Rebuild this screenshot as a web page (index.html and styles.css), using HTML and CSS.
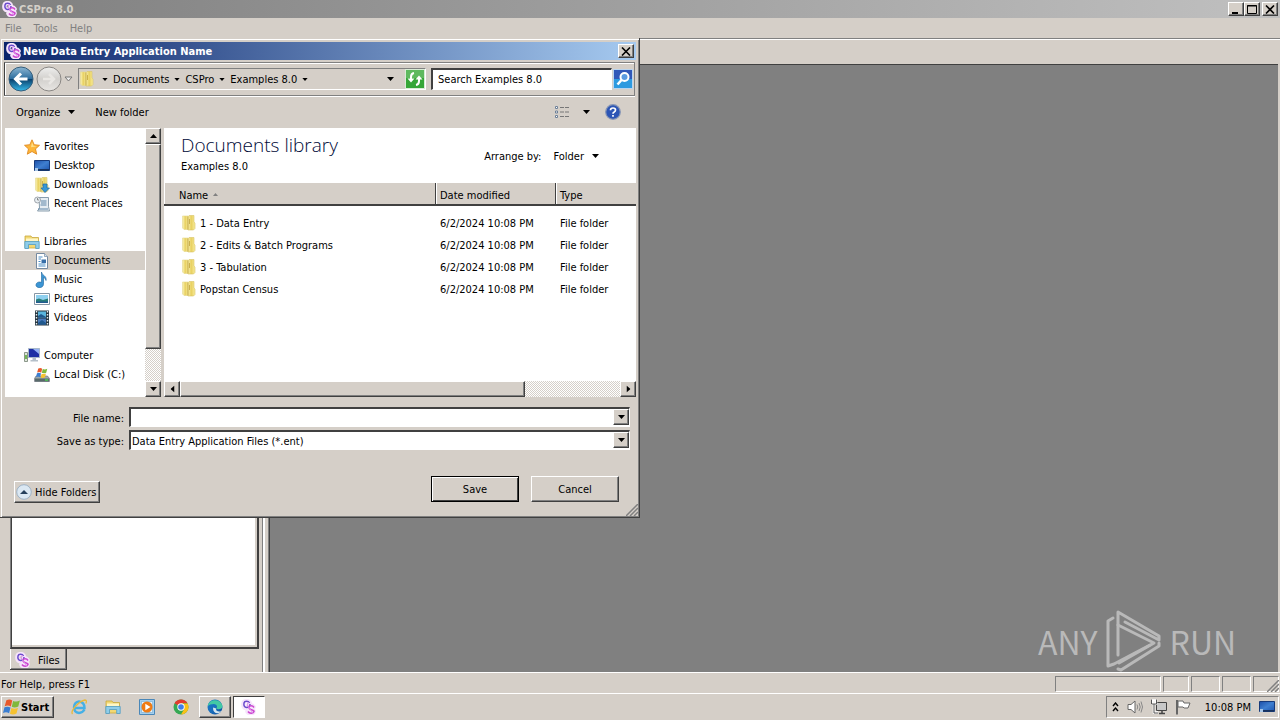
FILE: index.html
```html
<!DOCTYPE html>
<html lang="en">
<head>
  <meta charset="utf-8">
  <title>CSPro 8.0</title>
  <link rel="stylesheet" href="styles.css">
</head>
<body>
  <svg class="defs" aria-hidden="true">
    <linearGradient id="gFolder"><stop offset="0" stop-color="#fbf5bd"/><stop offset=".5" stop-color="#e8d060"/><stop offset="1" stop-color="#f8ec9c"/></linearGradient>
    <linearGradient id="gBlue" x2="0" y2="1"><stop offset="0" stop-color="#8db6d2"/><stop offset=".48" stop-color="#2f6f9f"/><stop offset=".52" stop-color="#0b426e"/><stop offset="1" stop-color="#35b9ea"/></linearGradient>
    <linearGradient id="gGrey" x2="0" y2="1"><stop offset="0" stop-color="#efefee"/><stop offset=".5" stop-color="#d2d0cd"/><stop offset="1" stop-color="#e8e6e3"/></linearGradient>
    <linearGradient id="gScreen" x2="1" y2="1"><stop offset="0" stop-color="#1c4fa8"/><stop offset=".5" stop-color="#3f7fd0"/><stop offset="1" stop-color="#1d55b0"/></linearGradient>
    <linearGradient id="gEdge" x2="1" y2="1"><stop offset="0" stop-color="#1879c8"/><stop offset=".5" stop-color="#1a6fbd"/><stop offset="1" stop-color="#0c4d9a"/></linearGradient>
    <symbol id="cspro" viewBox="0 0 16 16">
      <g fill="none" stroke="#f6e4fb" stroke-width="4.500" stroke-linecap="round"><path d="M8.500 3.500C7 1.500 3 1.500 2.500 4.500s1 5 3.500 4.500c2-.4 3-2 3-3.500"/><path d="M12.500 8C11 5.500 6.500 6 7.500 8.500S13 10 12.500 12.500 8 15 6.500 12.500"/></g>
      <path d="M8.500 4C7.500 1.500 3.500 1.500 3 4s.5 4.500 2.500 4.500c2 0 3.500-1.500 3.500-3.500" fill="none" stroke="#6a4ccc" stroke-width="1.500"/>
      <path d="M13 8.500C11.500 6 7 6.500 8 9s5.500 1.500 5 3.500-4.500 2.500-6 0" fill="none" stroke="#cc44d0" stroke-width="1.500"/>
      <path d="M7.500 3l-1.500 3 6 8" fill="none" stroke="#d987ea" stroke-width="1"/>
    </symbol>
    <symbol id="folder" viewBox="0 0 16 16">
      <path d="M1.500 1h5.500v13.500H3L1.500 13z" fill="url(#gFolder)" stroke="#e4d68a" stroke-width=".6"/>
      <path d="M6.500 2l1.500-1.500H13V7l1 1v5.500L12.500 15H7z" fill="url(#gFolder)" stroke="#d8c566" stroke-width=".6"/>
      <path d="M7 1.500v13M8.500 4v5" stroke="#c2a43c" stroke-width=".8"/>
    </symbol>
    <symbol id="star" viewBox="0 0 16 16"><path d="M8 .8l2.200 4.900 5.300.6-4 3.600 1.200 5.300L8 12.500l-4.700 2.700 1.200-5.300-4-3.600 5.300-.6z" fill="#fdb63a" stroke="#e08a22" stroke-width=".9"/><path d="M8 3l1.400 3.700 3.600.5-6 1z" fill="#ffe08a"/></symbol>
    <symbol id="desk" viewBox="0 0 16 16"><path d="M.5 2.500h15v10H.5z" fill="url(#gScreen)" stroke="#173a7a"/><path d="M1 11h14v1.500H1z" fill="#17325e"/><path d="M1 10h3v3H1z" fill="#a8c8ea"/></symbol>
    <symbol id="down" viewBox="0 0 16 16"><use href="#folder"/><path d="M9 7h4v4h2.500L11 15.500 7 11h2z" fill="#3796d6" stroke="#1b6aa8" stroke-width=".7"/></symbol>
    <symbol id="recent" viewBox="0 0 16 16"><path d="M5 1.500h9.500v9l1 4.500h-12l2-3z" fill="#e6edf2" stroke="#7d93a4" stroke-width=".9"/><path d="M7 5h5.500M7 7h5.500M6.500 9h6M4 13h10" stroke="#5f86a8"/><circle cx="3.500" cy="4" r="3" fill="#e8eef2" stroke="#8a9299" stroke-width=".8"/><path d="M3.500 2v2h1.500" fill="none" stroke="#666" stroke-width=".7"/></symbol>
    <symbol id="library" viewBox="0 0 16 16"><path d="M1 2h6l1 1.500h6.500V14H1z" fill="#f2d873" stroke="#c9a83e" stroke-width=".8"/><path d="M2 4.500h12v3H2z" fill="#fff6c6"/><path d="M.8 7.500h14.400v7h-3.500v-4H4.500v4H.8z" fill="#8fcdea" stroke="#4f9cc4" stroke-width=".8"/></symbol>
    <symbol id="doc" viewBox="0 0 16 16"><path d="M2.500.5h8l3 3v12h-11z" fill="#fff" stroke="#7489a0"/><path d="M10.500.5v3h3" fill="#d5e2ee" stroke="#7489a0" stroke-width=".7"/><path d="M4.500 4h4M4.500 6h2.500M4.500 8.500h2M4.500 11h7M4.500 13h7" stroke="#4a8dc6"/><path d="M7.500 6.500H12V10H7.500z" fill="#376ea8"/></symbol>
    <symbol id="music" viewBox="0 0 16 16"><path d="M7.500 0c.4 3.500 5.500 3.500 4.500 8.500-.6-2-1.500-2.800-2.500-3V12c0 5-8 4.500-7.500.8.400-2.800 3.500-3.300 5.500-2.300z" fill="#3b95d4" stroke="#1d659e" stroke-width=".6"/></symbol>
    <symbol id="pics" viewBox="0 0 16 16"><path d="M.5 2.500h15v11H.5z" fill="#fff" stroke="#8696a5"/><path d="M2 4h12v8H2z" fill="#8fd0ef"/><path d="M2 8.500l3-1 4 1.500 5-1.500V12H2z" fill="#277d78"/><path d="M2 10.500h12V12H2z" fill="#225b90"/></symbol>
    <symbol id="video" viewBox="0 0 16 16"><path d="M1 .5h14v15H1z" fill="#263640"/><path d="M4 1.500h8v6H4z" fill="#5ab5dd"/><path d="M4 8.500h8v6H4z" fill="#4879bb"/><path d="M4 6l3-2 5 3v.5H4zM4 13l4-3 4 3v1.500H4z" fill="#1f588d"/><path d="M2.500 1v14M13.500 1v14" stroke="#e9eef1" stroke-width="1.400" stroke-dasharray="1.500 1.500"/></symbol>
    <symbol id="computer" viewBox="0 0 16 16"><path d="M.5 4.500h3v9h-3z" fill="#dfe6da" stroke="#718071" stroke-width=".8"/><path d="M1 7h2v4H1z" fill="#74b957"/><path d="M4.500.5h11v9h-11z" fill="#1d2fa4" stroke="#a9b9ca"/><path d="M9 1h6v5z" fill="#93b0f3"/><path d="M8.500 10h3.500v2h2v1.500H6.500V12h2z" fill="#b5c0ca"/></symbol>
    <symbol id="winflag" viewBox="0 0 16 16"><path d="M3 2q3-1.500 5.200.2L7 7.500Q4.500 6 1.500 7.300z" fill="#e8592b"/><path d="M9 2.600q3 1.300 6-.3l-1.400 5.200Q10.500 9 7.800 7.800z" fill="#80b83b"/><path d="M1.300 8.300Q4 7 6.700 8.500l-1.300 5Q3 12 0 13.300z" fill="#3b7ed1"/><path d="M7.500 8.900q3 1.300 5.800-.3L12 13.800q-3 1.500-5.800.2z" fill="#f6c230"/></symbol>
    <symbol id="disk" viewBox="0 0 16 16"><path d="M2 9h11.500l2 2.500v3H.5v-3z" fill="#9eaaad" stroke="#667" stroke-width=".6"/><path d="M1 11.500h14v3H1z" fill="#596a6b"/><path d="M11 13h3" stroke="#4ce04c" stroke-width="1.300"/><use href="#winflag" x="2" y="0" width="12" height="12"/></symbol>
    <symbol id="tri" viewBox="0 0 7 4"><path d="M0 0h7L3.500 4z"/></symbol>
  </svg>

  <div class="desktop">
    <header class="titlebar inactive">
      <svg class="ico"><use href="#cspro"/></svg>
      <span class="title">CSPro 8.0</span>
      <button class="cap" aria-label="Minimize"><svg viewBox="0 0 10 9"><path d="M1 7h6v2H1z"/></svg></button>
      <button class="cap" aria-label="Maximize"><svg viewBox="0 0 10 9"><path d="M.5.500h9v8h-9zM0 1h10" fill="none" stroke="#000"/></svg></button>
      <button class="cap cap-close" aria-label="Close"><svg viewBox="0 0 10 9"><path d="M1 .5l8 8M9 .5l-8 8" stroke="#000" stroke-width="1.600"/></svg></button>
    </header>
    <nav class="menubar">
      <button>File</button><button>Tools</button><button>Help</button>
    </nav>
    <div class="toolbar"></div>

    <main class="work">
      <aside class="side">
        <div class="tree"></div>
        <button class="tab"><svg class="ico"><use href="#cspro"/></svg>Files</button>
      </aside>
      <div class="splitter"></div>
      <section class="canvas">
        <div class="watermark">
          <span>ANY</span>
          <svg viewBox="0 0 56 62"><g fill="none" stroke="#b9b9b9" stroke-width="3" stroke-linejoin="round" stroke-linecap="round"><path d="M7 8L2 11v45l6-2 36-19"/><path d="M12 45V2l41 24v4L19 12"/><path d="M12 15l36 18-35 20"/><path d="M12 59l3 1 38-24v-3"/></g></svg>
          <span>RUN</span>
        </div>
      </section>
    </main>

    <footer class="statusbar">
      <span class="status-text">For Help, press F1</span>
      <i class="pane pane-wide"></i><i class="pane pane-s"></i><i class="pane"></i><i class="pane"></i><i class="pane pane-s"></i>
      <svg class="grip" viewBox="0 0 12 12"><path d="M0 12L12 0M4 12l8-8M8 12l4-4" stroke="#808080" stroke-width="1.500"/></svg>
    </footer>

    <div class="taskbar">
      <button class="start"><svg class="ico-lg" viewBox="0 0 16 16"><use href="#winflag"/></svg>Start</button>
      <div class="quick">
        <button class="task" aria-label="Internet Explorer"><svg class="ico" viewBox="0 0 16 16"><path d="M13.500 10.500Q11.500 14 8 14q-5-.5-5-6 .5-5 5-5.500 5.500.500 5.500 6.500H4" fill="none" stroke="#45b0e6" stroke-width="2.400"/><path d="M1.500 15C-1 12 8 2 14 1c2 .2 1.500 2 .8 3.500" fill="none" stroke="#e9b93a" stroke-width="1.300"/></svg></button>
        <button class="task" aria-label="Explorer"><svg class="ico"><use href="#library"/></svg></button>
        <button class="task" aria-label="Media Player"><svg class="ico" viewBox="0 0 16 16"><path d="M.5.500h15v15H.5z" fill="#a3cfee" stroke="#4a87b8"/><path d="M2.500 2.500h11v11h-11z" fill="#e4f2fb" stroke="#73a9d0" stroke-width=".6"/><circle cx="8" cy="8" r="5.500" fill="#ef7b14"/><path d="M6.300 4.800L11.500 8l-5.200 3.200z" fill="#fff"/></svg></button>
        <button class="task" aria-label="Chrome"><svg class="ico" viewBox="0 0 16 16"><circle cx="8" cy="8" r="7.500" fill="#36a853"/><path d="M8 8L1.500 4.300A7.500 7.500 0 0 1 14.500 4.300H8z" fill="#e33b2e"/><path d="M8 15.500A7.500 7.500 0 0 0 14.600 4.400H8L11.200 9.900z" fill="#fbc116"/><circle cx="8" cy="8" r="3.700" fill="#fff"/><circle cx="8" cy="8" r="2.800" fill="#3f7fe8"/></svg></button>
        <button class="task raised" aria-label="Edge"><svg class="ico" viewBox="0 0 16 16"><circle cx="8" cy="8" r="7.500" fill="url(#gEdge)"/><path d="M.7 7C2 0 13-1 15.400 6.500c.5 4-4.400 4.500-6.200 3 2-2.500-.2-4.500-2.500-4.500Q3 5 .7 7z" fill="#43c9a4"/><path d="M9.200 9.500c-1 3 3.300 3.800 5.300 2.400-3.500 5-9.500 1.500-8.300-3.400z" fill="#d4e6ef"/></svg></button>
        <button class="task pressed" aria-label="CSPro"><svg class="ico"><use href="#cspro"/></svg></button>
      </div>
      <div class="tray">
        <svg class="chev" viewBox="0 0 7 10"><path d="M1 4l2.500-3L6 4M1 9l2.500-3L6 9" fill="none" stroke="#000" stroke-width="1.400"/></svg>
        <svg class="ico" viewBox="0 0 16 16"><path d="M1 5.500h3L8 2v12l-4-3.500H1z" fill="#fff" stroke="#666"/><path d="M10 5.500q1.500 2.500 0 5M12 4q2.500 4 0 8M14 2.500q3 5.500 0 11" fill="none" stroke="#888"/></svg>
        <svg class="ico" viewBox="0 0 16 16"><path d="M5.500 3.500h10v8h-10z" fill="#c8c8c8" stroke="#444"/><path d="M8 14.500h6M11 12v2" stroke="#444" stroke-width="1.500"/><path d="M1 1.500h4v3H1zM3 5v8.500h4" fill="none" stroke="#fff" stroke-width="2.500"/><path d="M.5.500v4.500h5V.5M3 5v9h4" fill="none" stroke="#555"/></svg>
        <svg class="ico" viewBox="0 0 16 16"><path d="M2 1v14.500" stroke="#666" stroke-width="2"/><path d="M3 2h5l1 2h6l-2 5H9L8 8H3z" fill="#fff" stroke="#666"/></svg>
        <time class="clock">10:08 PM</time>
        <svg class="ico"><use href="#desk"/></svg>
      </div>
    </div>

    <form class="dialog" onsubmit="return false">
      <div class="titlebar active">
        <svg class="ico"><use href="#cspro"/></svg>
        <span class="title">New Data Entry Application Name</span>
        <button type="button" class="cap cap-close" aria-label="Close"><svg viewBox="0 0 10 9"><path d="M1 .5l8 8M9 .5l-8 8" stroke="#000" stroke-width="1.600"/></svg></button>
      </div>

      <div class="address">
        <button type="button" class="round" aria-label="Back"><svg viewBox="0 0 26 26"><circle cx="13" cy="13" r="12" fill="url(#gBlue)" stroke="#365e7b"/><path d="M19.500 13H8M13 7.500L7.500 13l5.500 5.500" fill="none" stroke="#fff" stroke-width="3"/></svg></button>
        <button type="button" class="round" aria-label="Forward"><svg viewBox="0 0 26 26"><circle cx="13" cy="13" r="12" fill="url(#gGrey)" stroke="#8a8784"/><path d="M7 13h11M13 8l5 5-5 5" fill="none" stroke="#e9e7e4" stroke-width="2.500"/></svg></button>
        <button type="button" class="recentdrop" aria-label="Recent pages"><svg viewBox="0 0 9 6"><path d="M1 1h7L4.500 5z" fill="#eee" stroke="#777"/></svg></button>
        <div class="crumbs">
          <svg class="ico"><use href="#folder"/></svg>
          <svg class="tri first"><use href="#tri"/></svg>
          <button type="button">Documents</button><svg class="tri"><use href="#tri"/></svg>
          <button type="button">CSPro</button><svg class="tri"><use href="#tri"/></svg>
          <button type="button">Examples 8.0</button><svg class="tri"><use href="#tri"/></svg>
          <svg class="tri last"><use href="#tri"/></svg>
          <button type="button" class="refresh" aria-label="Refresh"><svg viewBox="0 0 20 20"><path d="M0 0h20v20H0z" fill="#d9ecd6"/><path d="M1 1h18v18H1z" fill="#35a637"/><path d="M1 1h18v8H1z" fill="#5fb95f"/><path d="M9 4Q6 4.500 6 8v2M11 16q3-.5 3-4v-2" fill="none" stroke="#fff" stroke-width="2"/><path d="M2.500 9.500h7L6 13.500zM10.500 10.500h7L14 6.500z" fill="#fff"/></svg></button>
        </div>
        <input class="search" type="text" placeholder="Search Examples 8.0" aria-label="Search Examples 8.0">
        <button type="button" class="go" aria-label="Search"><svg viewBox="0 0 20 20"><path d="M0 0h20v20H0z" fill="#b9d4ee"/><path d="M1 1h18v18H1z" fill="#2d9ae0"/><path d="M1 1h18v9H1z" fill="#3158b8"/><circle cx="11.500" cy="8" r="4" fill="#5a9be0" stroke="#fff" stroke-width="2"/><path d="M8.500 11l-4 4.500" stroke="#fff" stroke-width="2.500"/></svg></button>
      </div>

      <div class="commands">
        <button type="button">Organize <svg class="tri"><use href="#tri"/></svg></button>
        <button type="button">New folder</button>
        <button type="button" class="view" aria-label="Change your view"><svg class="ico" viewBox="0 0 16 16"><path d="M1.500 2.500h2v2h-2zM1.500 7h2v2h-2zM1.500 11.500h2v2h-2z" fill="#fff" stroke="#6d8098"/><path d="M6 3.500h4m1 0h4M6 8h4m1 0h4M6 12.500h4m1 0h4" stroke="#777"/></svg><svg class="tri"><use href="#tri"/></svg></button>
        <button type="button" aria-label="Help"><svg class="ico" viewBox="0 0 16 16"><circle cx="8" cy="8" r="7.300" fill="#2c55b5" stroke="#8796b5" stroke-width="1.200"/><path d="M5.500 6.200Q5.500 4 8 4t2.500 2q0 1.200-1.300 1.900Q8 8.500 8 9.800M8 11v1.800" fill="none" stroke="#fff" stroke-width="1.700"/></svg></button>
      </div>

      <div class="browser">
        <div class="places">
          <ul class="group">
            <li class="root"><svg class="ico"><use href="#star"/></svg>Favorites</li>
            <li><svg class="ico"><use href="#desk"/></svg>Desktop</li>
            <li><svg class="ico"><use href="#down"/></svg>Downloads</li>
            <li><svg class="ico"><use href="#recent"/></svg>Recent Places</li>
          </ul>
          <ul class="group">
            <li class="root"><svg class="ico"><use href="#library"/></svg>Libraries</li>
            <li class="selected"><svg class="ico"><use href="#doc"/></svg>Documents</li>
            <li><svg class="ico"><use href="#music"/></svg>Music</li>
            <li><svg class="ico"><use href="#pics"/></svg>Pictures</li>
            <li><svg class="ico"><use href="#video"/></svg>Videos</li>
          </ul>
          <ul class="group">
            <li class="root"><svg class="ico"><use href="#computer"/></svg>Computer</li>
            <li><svg class="ico"><use href="#disk"/></svg>Local Disk (C:)</li>
          </ul>
        </div>
        <div class="scroll vertical">
          <button type="button" aria-label="Scroll up"><svg class="tri up"><use href="#tri"/></svg></button>
          <div class="thumb"></div>
          <div class="track"></div>
          <button type="button" aria-label="Scroll down"><svg class="tri"><use href="#tri"/></svg></button>
        </div>
        <div class="listing">
          <div class="libhead">
            <div>
              <h1>Documents library</h1>
              <p>Examples 8.0</p>
            </div>
            <div class="arrange">Arrange by: <button type="button">Folder <svg class="tri"><use href="#tri"/></svg></button></div>
          </div>
          <table class="files">
            <thead>
              <tr><th class="c-name">Name <svg class="sort" viewBox="0 0 7 4"><path d="M0 4h7L3.500 0z"/></svg></th><th class="c-date">Date modified</th><th>Type</th></tr>
            </thead>
            <tbody>
              <tr><td><svg class="ico"><use href="#folder"/></svg>1 - Data Entry</td><td>6/2/2024 10:08 PM</td><td>File folder</td></tr>
              <tr><td><svg class="ico"><use href="#folder"/></svg>2 - Edits &amp; Batch Programs</td><td>6/2/2024 10:08 PM</td><td>File folder</td></tr>
              <tr><td><svg class="ico"><use href="#folder"/></svg>3 - Tabulation</td><td>6/2/2024 10:08 PM</td><td>File folder</td></tr>
              <tr><td><svg class="ico"><use href="#folder"/></svg>Popstan Census</td><td>6/2/2024 10:08 PM</td><td>File folder</td></tr>
            </tbody>
          </table>
          <div class="scroll horizontal">
            <button type="button" aria-label="Scroll left"><svg class="tri left"><use href="#tri"/></svg></button>
            <div class="thumb"></div>
            <div class="track"></div>
            <button type="button" aria-label="Scroll right"><svg class="tri right"><use href="#tri"/></svg></button>
          </div>
        </div>
      </div>

      <div class="fields">
        <label for="filename">File name:</label>
        <div class="combo"><input id="filename" type="text"><button type="button" aria-label="Previous names"><svg class="tri"><use href="#tri"/></svg></button></div>
        <label for="filetype">Save as type:</label>
        <div class="combo"><select id="filetype"><option>Data Entry Application Files (*.ent)</option></select><span class="drop"><svg class="tri"><use href="#tri"/></svg></span></div>
      </div>

      <div class="actions">
        <button type="button" class="btn hide"><svg class="ico" viewBox="0 0 16 16"><circle cx="8" cy="8" r="7.300" fill="#dbe8f3" stroke="#9fb3c6"/><path d="M4 10h8L8 6z" fill="#26405c"/></svg>Hide Folders</button>
        <button type="submit" class="btn save">Save</button>
        <button type="button" class="btn">Cancel</button>
      </div>
      <svg class="grip" viewBox="0 0 12 12"><path d="M0 12L12 0M4 12l8-8M8 12l4-4" stroke="#808080" stroke-width="1.500"/></svg>
    </form>
  </div>
</body>
</html>
```
FILE: styles.css
```css
* {
  box-sizing: border-box;
}

:root {
  --face: #d5cfc8;
  --shadow: #808080;
  --dark: #404040;
}

body {
  margin: 0;
  background: var(--face);
  font-family: "DejaVu Sans Condensed", "DejaVu Sans", sans-serif;
  font-size: 11px;
  line-height: 15px;
  color: #000;
}

button, input, select {
  font: inherit;
  color: inherit;
  margin: 0;
  padding: 0;
  border: 0;
  background: none;
}

svg {
  display: block;
  flex: none;
}

.defs {
  position: absolute;
  width: 0;
  height: 0;
}

.ico {
  width: 16px;
  height: 16px;
}

.ico-lg {
  width: 18px;
  height: 18px;
}

.tri {
  width: 7px;
  height: 4px;
}

.up { transform: rotate(180deg); }
.left { transform: rotate(90deg); }
.right { transform: rotate(-90deg); }

.desktop {
  position: relative;
  min-height: 100vh;
  display: flex;
  flex-direction: column;
}

/* title bars */
.titlebar {
  display: flex;
  align-items: center;
  height: 18px;
  padding: 0 2px;
  font-weight: bold;
}

.titlebar .title {
  flex: 1;
  padding-left: 1px;
}

.inactive {
  background: linear-gradient(to right, #808080, #c0c0c0);
  color: #d4d0c8;
}

.active {
  background: linear-gradient(to right, #0a246a, #a6caf0);
  color: #fff;
}

.cap {
  width: 16px;
  height: 14px;
  display: flex;
  align-items: center;
  justify-content: center;
  background: var(--face);
  border: 1px solid;
  border-color: #fff var(--dark) var(--dark) #fff;
  box-shadow: inset -1px -1px var(--shadow);
}

.cap svg {
  width: 10px;
  height: 9px;
}

.cap-close {
  margin-left: 2px;
}

.menubar {
  display: flex;
  gap: 12px;
  height: 20px;
  padding: 0 5px;
  color: var(--shadow);
}

.toolbar {
  height: 26px;
  border-top: 1px solid var(--shadow);
  box-shadow: inset 0 1px #fff;
}

/* work area */
.work {
  flex: 1;
  display: flex;
  padding-right: 2px;
  border-bottom: 1px solid #fff;
}

.side {
  width: 262px;
  display: flex;
  flex-direction: column;
  align-items: flex-start;
  padding: 0 3px 2px 10px;
}

.tree {
  flex: 1;
  align-self: stretch;
  background: #fff;
  border: 2px solid var(--dark);
  border-left: 1px solid var(--shadow);
  box-shadow: inset 1px 0 var(--dark), inset -2px -2px var(--face);
}

.tab {
  display: flex;
  align-items: center;
  gap: 7px;
  height: 21px;
  padding: 2px 6px 0 5px;
  border: solid var(--dark);
  border-width: 0 1px 1px 0;
  box-shadow: inset 1px 0 #fff, inset -1px -1px var(--shadow);
}

.splitter {
  width: 8px;
  border-left: 1px solid var(--shadow);
  border-right: 1px solid var(--dark);
  box-shadow: inset 2px 0 #fff, inset -1px 0 var(--shadow);
}

.canvas {
  flex: 1;
  display: flex;
  align-items: flex-end;
  justify-content: flex-end;
  background: var(--shadow);
  border-top: 1px solid var(--dark);
}

.watermark {
  display: flex;
  align-items: center;
  gap: 8px;
  width: 240px;
  color: #b9b9b9;
  font-family: "Noto Sans CJK SC", sans-serif;
  font-size: 32px;
  line-height: 62px;
}

.watermark svg {
  width: 56px;
  height: 62px;
}

/* status bar */
.statusbar {
  display: flex;
  align-items: center;
  gap: 2px;
  height: 20px;
  padding: 3px 1px 1px;
  position: relative;
}

.status-text {
  flex: 1;
}

.pane {
  width: 29px;
  height: 16px;
  border: 1px solid;
  border-color: var(--shadow) #fff #fff var(--shadow);
}

.pane-wide { width: 106px; }
.pane-s { width: 26px; }

.grip {
  position: absolute;
  right: 1px;
  bottom: 1px;
  width: 12px;
  height: 12px;
}

/* taskbar */
.taskbar {
  display: flex;
  align-items: center;
  height: 27px;
  padding: 1px;
  border-top: 1px solid #fff;
}

.start, .task.raised, .btn {
  border: 1px solid;
  border-color: #fff var(--dark) var(--dark) #fff;
  box-shadow: inset -1px -1px var(--shadow);
}

.start {
  display: flex;
  align-items: center;
  width: 53px;
  height: 22px;
  padding-left: 1px;
  font-weight: bold;
}

.quick {
  display: flex;
  flex: 1;
  gap: 2px;
  padding-left: 9px;
}

.task {
  display: flex;
  align-items: center;
  justify-content: center;
  width: 32px;
  height: 22px;
}

.task.pressed {
  background: #fff;
  border: 1px solid;
  border-color: var(--dark) #fff #fff var(--dark);
}

.tray {
  display: flex;
  align-items: center;
  gap: 8px;
  height: 22px;
  padding: 0 3px 0 5px;
  border: 1px solid;
  border-color: var(--shadow) #fff #fff var(--shadow);
}

.chev {
  width: 7px;
  height: 10px;
}

.clock {
  padding-left: 6px;
}

/* save dialog */
.dialog {
  position: absolute;
  left: 0;
  top: 38px;
  width: 640px;
  padding: 4px 3px 14px 4px;
  background: var(--face);
  border: solid;
  border-width: 0 1px 1px 0;
  border-color: var(--dark);
  box-shadow: inset 1px 1px var(--face), inset 2px 2px #fff, inset -1px -1px var(--shadow);
}

.address {
  display: flex;
  align-items: center;
  height: 34px;
  margin: 2px 1px 0 0;
  padding: 0 1px 0 3px;
  border: 1px solid var(--shadow);
  border-left-color: var(--dark);
  box-shadow: inset 1px 1px #fff, 0 1px #fff;
}

.round, .round svg {
  width: 26px;
  height: 26px;
}

.round + .round {
  margin-left: 2px;
}

.recentdrop {
  padding: 0 5px 0 2px;
}

.recentdrop svg {
  width: 9px;
  height: 6px;
}

.crumbs {
  flex: 1;
  display: flex;
  align-items: center;
  gap: 5px;
  height: 22px;
  border: 1px solid;
  border-color: var(--shadow) #fff #fff var(--shadow);
}

.crumbs .tri {
  width: 6px;
  height: 3px;
}

.crumbs .first {
  margin-left: 2px;
}

.crumbs .last {
  width: 7px;
  height: 4px;
  margin-left: auto;
}

.refresh, .refresh svg, .go, .go svg {
  width: 20px;
  height: 20px;
}

.refresh {
  margin-left: 6px;
}

.search {
  width: 181px;
  height: 22px;
  margin: 0 1px 0 5px;
  padding: 0 5px;
  background: #fff;
  border: solid;
  border-width: 2px 1px 1px 2px;
  border-color: var(--dark) #fff #fff var(--dark);
}

.search::placeholder {
  color: #000;
  opacity: 1;
}

.commands {
  display: flex;
  align-items: center;
  gap: 20px;
  height: 32px;
  padding: 0 15px 0 12px;
}

.commands button, .arrange button {
  display: flex;
  align-items: center;
  gap: 8px;
}

.commands .view {
  margin-left: auto;
  gap: 13px;
  margin-right: -5px;
}

/* places and files */
.browser {
  display: flex;
  height: 269px;
}

.places {
  width: 141px;
  padding-top: 9px;
  background: #fff;
  border-left: 1px solid var(--face);
}

.group {
  list-style: none;
  margin: 0 0 19px;
  padding: 0;
  line-height: 17px;
}

.group li {
  display: flex;
  align-items: center;
  gap: 4px;
  height: 19px;
  padding-left: 29px;
}

.group .root {
  padding-left: 19px;
}

.group .selected {
  background: var(--face);
}

.scroll {
  display: flex;
  background: var(--face);
}

.vertical {
  flex-direction: column;
  width: 16px;
}

.scroll button, .thumb, .combo button, .drop {
  display: flex;
  align-items: center;
  justify-content: center;
  width: 16px;
  height: 16px;
  background: var(--face);
  border: 1px solid;
  border-color: #fff var(--dark) var(--dark) #fff;
  box-shadow: inset -1px -1px var(--shadow);
}

.track {
  flex: 1;
  background: repeating-conic-gradient(#fff 0 25%, var(--face) 0 50%) 0 0 / 2px 2px;
}

.vertical .thumb {
  height: 205px;
}

.horizontal .thumb {
  width: 345px;
}

.listing {
  flex: 1;
  display: flex;
  flex-direction: column;
  margin-left: 3px;
  background: #fff;
}

.libhead {
  display: flex;
  justify-content: space-between;
  padding: 5px 37px 4px 17px;
  height: 55px;
}

.libhead h1 {
  margin: 0;
  font-family: "Open Sans", "Noto Sans", sans-serif;
  font-size: 19px;
  font-weight: 300;
  line-height: 24px;
  color: #000a38;
}

.libhead p {
  margin: 2px 0 0;
}

.arrange {
  display: flex;
  align-items: center;
  gap: 12px;
}

.files {
  width: 100%;
  border-collapse: separate;
  border-spacing: 0;
  table-layout: fixed;
  margin-bottom: auto;
}

.files th {
  height: 23px;
  padding: 3px 4px 0;
  background: var(--face);
  border-bottom: 2px solid var(--dark);
  border-right: 1px solid var(--dark);
  box-shadow: inset 1px 0 #fff;
  font-weight: normal;
  text-align: left;
}

.files th:last-child {
  border-right: 0;
}

.files .c-name {
  width: 272px;
  padding-left: 15px;
}

.c-date {
  width: 120px;
}

.sort {
  display: inline-block;
  width: 5px;
  height: 3px;
  margin-left: 2px;
  vertical-align: 3px;
  fill: #808080;
}

.files tbody::before {
  content: "";
  display: block;
  height: 6px;
}

.files td {
  height: 22px;
  padding: 1px 4px 0;
}

.files td:first-child {
  padding: 0 0 0 17px;
}

.files td .ico {
  display: inline-block;
  vertical-align: -4px;
  margin-right: 3px;
}

/* file name fields */
.fields {
  display: grid;
  grid-template-columns: 120px 1fr;
  align-items: center;
  gap: 3px 5px;
  padding: 10px 6px 0 0;
}

.fields label {
  padding-top: 2px;
  text-align: right;
}

.combo {
  position: relative;
  display: flex;
  height: 20px;
  background: #fff;
  border: solid;
  border-width: 2px 1px 1px 2px;
  border-color: var(--dark) #fff #fff var(--dark);
}

.combo input, .combo select {
  flex: 1;
  padding: 1px 1px 0;
  appearance: none;
  outline: 0;
}

.drop {
  position: absolute;
  right: 0;
  top: 0;
  pointer-events: none;
}

.actions {
  display: flex;
  gap: 12px;
  padding: 26px 17px 0 10px;
}

.btn {
  width: 88px;
  height: 26px;
}

.save {
  border-color: #000;
  box-shadow: inset 1px 1px #fff, inset -1px -1px var(--dark);
}

.hide {
  display: flex;
  align-items: center;
  gap: 3px;
  width: 86px;
  height: 22px;
  margin: 5px auto 0 0;
  padding-left: 1px;
  white-space: nowrap;
}
```
